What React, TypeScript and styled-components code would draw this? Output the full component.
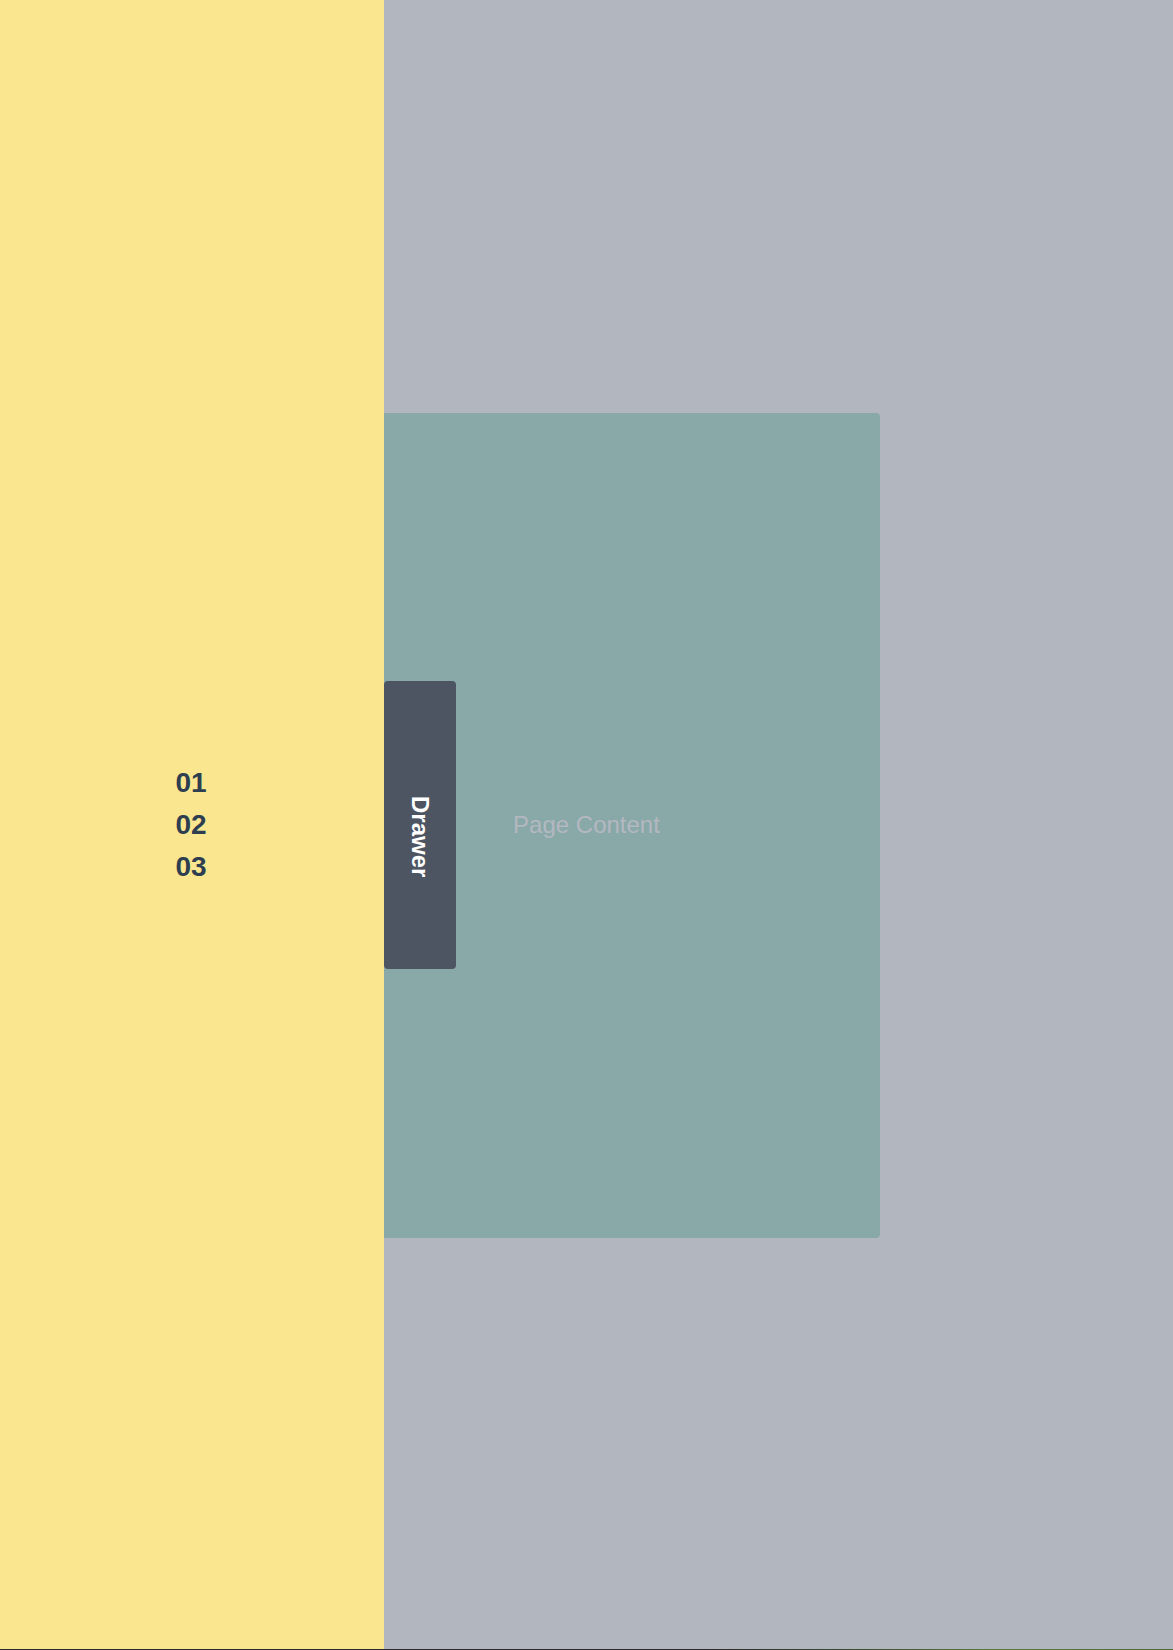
import React from "react";
import styled, { createGlobalStyle } from "styled-components";

const Global = createGlobalStyle`
  html, body {
    margin: 0;
    padding: 0;
    background: #b2b6bf;
    font-family: "Liberation Sans", Arial, sans-serif;
  }
  * { box-sizing: border-box; }
`;

const Page = styled.main`
  min-height: 100vh;
  width: 100%;
  display: flex;
  align-items: center;
  justify-content: center;
  background: #b2b6bf;
`;

const ContentBox = styled.section`
  width: 50%;
  height: 50vh;
  background: #89a8a8;
  border-radius: 4px;
  display: flex;
  align-items: center;
  justify-content: center;
  color: #b3b8c1;
  font-size: 24px;
`;

const Drawer = styled.aside`
  position: fixed;
  left: 0;
  top: 0;
  bottom: 0;
  width: 384px;
  background: #f9e68e;
  display: flex;
  align-items: center;
  justify-content: center;
  z-index: 10;
`;

const NumberList = styled.ul`
  list-style: none;
  margin: 0 2px 0 0;
  padding: 0;
  color: #2d3e50;
  font-size: 28px;
  font-weight: 700;
  line-height: 42px;
`;

const Tab = styled.button`
  position: absolute;
  left: 100%;
  top: 50%;
  transform: translateY(-50%);
  width: 72px;
  height: 288px;
  border: none;
  padding: 24px 0 0 0;
  background: #4d5563;
  border-radius: 4px;
  display: flex;
  align-items: center;
  justify-content: center;
  cursor: pointer;
`;

const TabLabel = styled.span`
  writing-mode: vertical-rl;
  color: #ffffff;
  font-family: "Liberation Sans", Arial, sans-serif;
  font-size: 24px;
  font-weight: 700;
  line-height: 1;
`;

const BottomEdge = styled.div`
  position: fixed;
  left: 0;
  right: 0;
  bottom: 0;
  height: 1px;
  z-index: 20;
  background: linear-gradient(
    to right,
    #2b2b2b 0%,
    #2b2b2b 60%,
    #3a4a30 72%,
    #5a7a3a 85%,
    #4a6a35 100%
  );
`;

export default function App() {
  return (
    <>
      <Global />
      <Page>
        <ContentBox>Page Content</ContentBox>
      </Page>
      <Drawer>
        <NumberList>
          <li>01</li>
          <li>02</li>
          <li>03</li>
        </NumberList>
        <Tab type="button">
          <TabLabel>Drawer</TabLabel>
        </Tab>
      </Drawer>
      <BottomEdge />
    </>
  );
}
